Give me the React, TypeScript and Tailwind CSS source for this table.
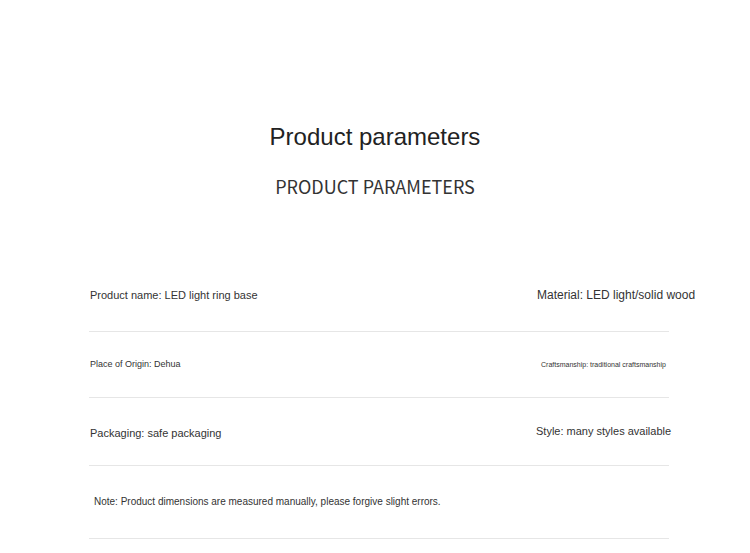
import React from "react";

const arial = { fontFamily: '"Liberation Sans", Arial, sans-serif' } as const;

export default function App() {
  return (
    <div className="w-[750px] h-[553px] bg-white overflow-hidden text-[#333]" style={arial}>
      <div className="h-[270px] pt-[125px] text-center">
        <div className="text-[24px] leading-[24px] text-[#222]">Product parameters</div>
        <div
          className="mt-[28px] text-[18px] leading-[18px] text-[#333]"
          style={{ fontFamily: '"Noto Sans CJK SC", "Noto Sans", sans-serif' }}
        >
          PRODUCT PARAMETERS
        </div>
      </div>
      <div className="ml-[89px] w-[580px] whitespace-nowrap">
        <div className="grid grid-cols-[447px_1fr] h-[62px] border-b border-[#e6e6e6]">
          <div className="mt-[20px] ml-[1px] text-[11px] leading-[11px]">Product name: LED light ring base</div>
          <div className="mt-[18.5px] ml-[1px] text-[12px] leading-[12px]">Material: LED light/solid wood</div>
        </div>
        <div className="grid grid-cols-[447px_1fr] h-[66px] border-b border-[#e6e6e6]">
          <div className="mt-[28px] ml-[1px] text-[9px] leading-[9px]">Place of Origin: Dehua</div>
          <div className="mt-[29px] ml-[5px] text-[7px] leading-[7px]">Craftsmanship: traditional craftsmanship</div>
        </div>
        <div className="grid grid-cols-[447px_1fr] h-[68px] border-b border-[#e6e6e6]">
          <div className="mt-[30px] ml-[1px] text-[11px] leading-[11px]">Packaging: safe packaging</div>
          <div className="mt-[28px] text-[11px] leading-[11px]">Style: many styles available</div>
        </div>
        <div className="h-[73px] pt-[31px] border-b border-[#e6e6e6]">
          <div className="ml-[5px] text-[10px] leading-[10px]">
            Note: Product dimensions are measured manually, please forgive slight errors.
          </div>
        </div>
      </div>
    </div>
  );
}
